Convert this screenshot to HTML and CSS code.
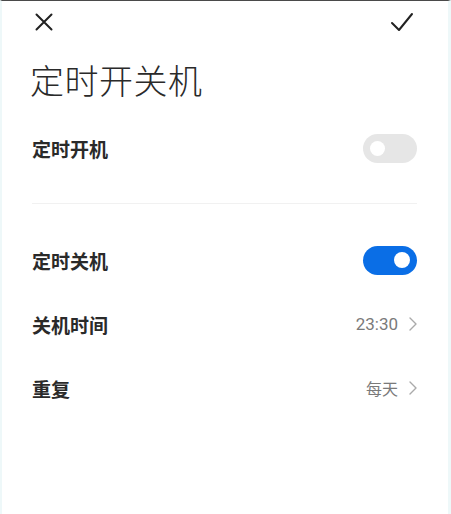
FILE: index.html
```html
<!DOCTYPE html>
<html lang="zh-CN">
<head>
<meta charset="utf-8">
<title>定时开关机</title>
<link rel="stylesheet" href="styles.css">
</head>
<body>
<div class="screen">
  <header class="topbar">
    <button class="icon-btn" aria-label="关闭">
      <svg width="20" height="20" viewBox="0 0 20 20"><path d="M2.5 2.5 L17.5 17.5 M17.5 2.5 L2.5 17.5" stroke="#222" stroke-width="2" stroke-linecap="round" fill="none"/></svg>
    </button>
    <button class="icon-btn" aria-label="确定">
      <svg width="24" height="20" viewBox="0 0 24 20"><path d="M2 11 L9 18 L22 2" stroke="#222" stroke-width="2" stroke-linecap="round" stroke-linejoin="round" fill="none"/></svg>
    </button>
  </header>
  <h1 class="title">定时开关机</h1>
  <div class="list">
    <div class="row">
      <span class="label">定时开机</span>
      <span class="switch"><span class="knob"></span></span>
    </div>
    <div class="divider"></div>
    <div class="row">
      <span class="label">定时关机</span>
      <span class="switch on"><span class="knob"></span></span>
    </div>
    <div class="row">
      <span class="label">关机时间</span>
      <span class="value"><span class="num">23:30</span><svg class="chev" width="8" height="14" viewBox="0 0 8 14"><path d="M1 1 L7 7 L1 13" stroke="#aaa" stroke-width="1.4" fill="none" stroke-linecap="round" stroke-linejoin="round"/></svg></span>
    </div>
    <div class="row">
      <span class="label">重复</span>
      <span class="value">每天<svg class="chev" width="8" height="14" viewBox="0 0 8 14"><path d="M1 1 L7 7 L1 13" stroke="#aaa" stroke-width="1.4" fill="none" stroke-linecap="round" stroke-linejoin="round"/></svg></span>
    </div>
  </div>
</div>
</body>
</html>
```
FILE: styles.css
```css
html, body {
  margin: 0;
  padding: 0;
  background: #ffffff;
}
body {
  font-family: "Noto Sans CJK SC", "Noto Sans", sans-serif;
  color: #222;
}
.screen {
  width: 451px;
  height: 514px;
  box-sizing: border-box;
  border-top: 1px solid #4a4a4a;
  border-left: 2px solid #eef8f9;
  border-right: 3px solid #eef8f9;
  display: flex;
  flex-direction: column;
}
.topbar {
  height: 41px;
  display: flex;
  justify-content: space-between;
  align-items: center;
  padding: 0 34px 0 32px;
}
.icon-btn {
  border: 0;
  background: none;
  padding: 0;
  display: flex;
}
.title {
  margin: 15px 0 13px 28px;
  font-size: 34px;
  line-height: 46px;
  font-weight: 300;
  color: #2a2a2a;
  letter-spacing: 0.5px;
}
.list {
  display: flex;
  flex-direction: column;
  padding: 0 31px 0 30px;
}
.row {
  height: 64px;
  display: flex;
  align-items: center;
  justify-content: space-between;
}
.label {
  font-size: 19px;
  font-weight: 700;
  color: #2a2a2a;
}
.divider {
  height: 1px;
  background: #f1f1f1;
  margin: 23px 0 24px;
}
.switch {
  width: 54px;
  height: 29px;
  border-radius: 15px;
  background: #e6e6e6;
  display: flex;
  align-items: center;
  padding: 0 7px;
  box-sizing: border-box;
}
.switch .knob {
  width: 15px;
  height: 15px;
  border-radius: 50%;
  background: #fff;
}
.switch.on {
  background: #0a6ee6;
  justify-content: flex-end;
}
.switch.on .knob {
  width: 16px;
  height: 16px;
}
.value {
  display: flex;
  align-items: center;
  gap: 11px;
  font-size: 16px;
  color: #7a7a7a;
}
.num {
  font-family: Roboto, sans-serif;
  font-size: 17px;
  font-weight: 400;
}
.chev {
  display: block;
}
```
